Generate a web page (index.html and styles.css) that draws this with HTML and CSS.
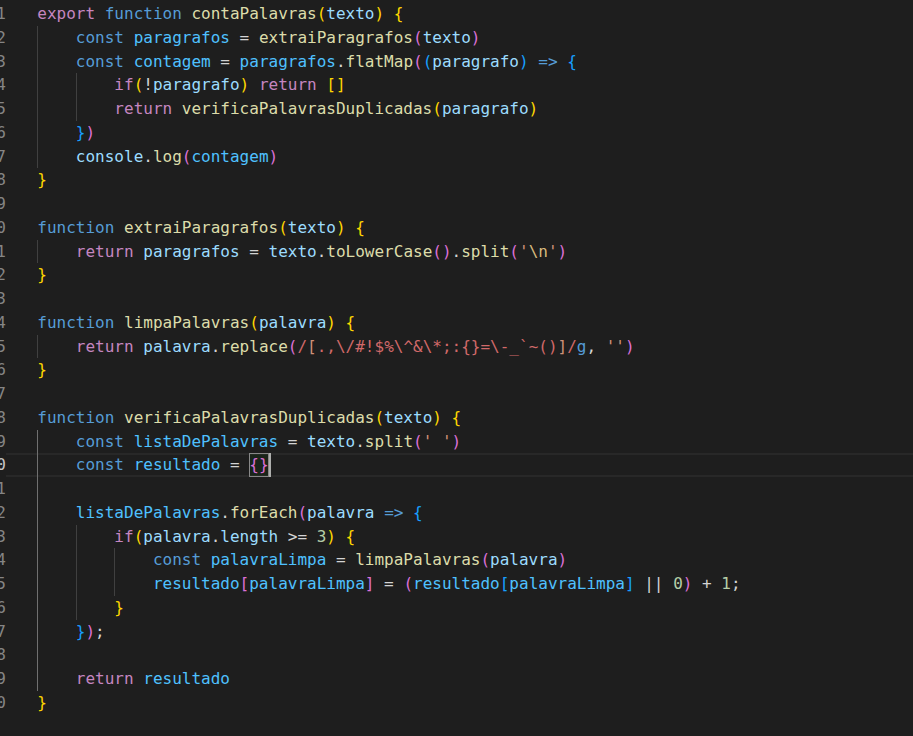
FILE: index.html
```html
<!DOCTYPE html>
<html lang="pt">
<head>
<meta charset="utf-8">
<title>editor</title>
<link rel="stylesheet" href="styles.css">
</head>
<body>
<div class="editor">
  <div class="line"><span class="num">1</span><span class="code"><span class="kw">export</span> <span class="st">function</span> <span class="fn">contaPalavras</span><span class="b1">(</span><span class="v">texto</span><span class="b1">)</span> <span class="b1">{</span></span></div>
  <div class="line"><span class="num">2</span><span class="code"><span class="g"></span><span class="st">const</span> <span class="c">paragrafos</span> = <span class="fn">extraiParagrafos</span><span class="b2">(</span><span class="v">texto</span><span class="b2">)</span></span></div>
  <div class="line"><span class="num">3</span><span class="code"><span class="g"></span><span class="st">const</span> <span class="c">contagem</span> = <span class="c">paragrafos</span>.<span class="fn">flatMap</span><span class="b2">(</span><span class="b3">(</span><span class="v">paragrafo</span><span class="b3">)</span> <span class="st">=&gt;</span> <span class="b3">{</span></span></div>
  <div class="line"><span class="num">4</span><span class="code"><span class="g"></span><span class="g"></span><span class="kw">if</span><span class="b1">(</span>!<span class="v">paragrafo</span><span class="b1">)</span> <span class="kw">return</span> <span class="b1">[]</span></span></div>
  <div class="line"><span class="num">5</span><span class="code"><span class="g"></span><span class="g"></span><span class="kw">return</span> <span class="fn">verificaPalavrasDuplicadas</span><span class="b1">(</span><span class="v">paragrafo</span><span class="b1">)</span></span></div>
  <div class="line"><span class="num">6</span><span class="code"><span class="g"></span><span class="b3">}</span><span class="b2">)</span></span></div>
  <div class="line"><span class="num">7</span><span class="code"><span class="g"></span><span class="v">console</span>.<span class="fn">log</span><span class="b2">(</span><span class="c">contagem</span><span class="b2">)</span></span></div>
  <div class="line"><span class="num">8</span><span class="code"><span class="b1">}</span></span></div>
  <div class="line"><span class="num">9</span><span class="code"></span></div>
  <div class="line"><span class="num">10</span><span class="code"><span class="st">function</span> <span class="fn">extraiParagrafos</span><span class="b1">(</span><span class="v">texto</span><span class="b1">)</span> <span class="b1">{</span></span></div>
  <div class="line"><span class="num">11</span><span class="code"><span class="g"></span><span class="kw">return</span> <span class="v">paragrafos</span> = <span class="v">texto</span>.<span class="fn">toLowerCase</span><span class="b2">()</span>.<span class="fn">split</span><span class="b2">(</span><span class="s">'</span><span class="esc">\n</span><span class="s">'</span><span class="b2">)</span></span></div>
  <div class="line"><span class="num">12</span><span class="code"><span class="b1">}</span></span></div>
  <div class="line"><span class="num">13</span><span class="code"></span></div>
  <div class="line"><span class="num">14</span><span class="code"><span class="st">function</span> <span class="fn">limpaPalavras</span><span class="b1">(</span><span class="v">palavra</span><span class="b1">)</span> <span class="b1">{</span></span></div>
  <div class="line"><span class="num">15</span><span class="code"><span class="g"></span><span class="kw">return</span> <span class="v">palavra</span>.<span class="fn">replace</span><span class="b2">(</span><span class="re">/</span><span class="s">[</span><span class="re">.,\/#!$%\^&amp;\*;:{}=\-_`~()</span><span class="s">]</span><span class="re">/</span><span class="st">g</span>, <span class="s">''</span><span class="b2">)</span></span></div>
  <div class="line"><span class="num">16</span><span class="code"><span class="b1">}</span></span></div>
  <div class="line"><span class="num">17</span><span class="code"></span></div>
  <div class="line"><span class="num">18</span><span class="code"><span class="st">function</span> <span class="fn">verificaPalavrasDuplicadas</span><span class="b1">(</span><span class="v">texto</span><span class="b1">)</span> <span class="b1">{</span></span></div>
  <div class="line"><span class="num">19</span><span class="code"><span class="g ga"></span><span class="st">const</span> <span class="c">listaDePalavras</span> = <span class="v">texto</span>.<span class="fn">split</span><span class="b2">(</span><span class="s">' '</span><span class="b2">)</span></span></div>
  <div class="line cur"><span class="num">20</span><span class="code"><span class="g ga"></span><span class="st">const</span> <span class="c">resultado</span> = <span class="match"><span class="b2">{}</span></span><span class="caret"></span></span></div>
  <div class="line"><span class="num">21</span><span class="code"><span class="g ga"></span></span></div>
  <div class="line"><span class="num">22</span><span class="code"><span class="g ga"></span><span class="c">listaDePalavras</span>.<span class="fn">forEach</span><span class="b2">(</span><span class="v">palavra</span> <span class="st">=&gt;</span> <span class="b3">{</span></span></div>
  <div class="line"><span class="num">23</span><span class="code"><span class="g ga"></span><span class="g"></span><span class="kw">if</span><span class="b1">(</span><span class="v">palavra</span>.<span class="v">length</span> &gt;= <span class="n">3</span><span class="b1">)</span> <span class="b1">{</span></span></div>
  <div class="line"><span class="num">24</span><span class="code"><span class="g ga"></span><span class="g"></span><span class="g"></span><span class="st">const</span> <span class="c">palavraLimpa</span> = <span class="fn">limpaPalavras</span><span class="b2">(</span><span class="v">palavra</span><span class="b2">)</span></span></div>
  <div class="line"><span class="num">25</span><span class="code"><span class="g ga"></span><span class="g"></span><span class="g"></span><span class="c">resultado</span><span class="b2">[</span><span class="c">palavraLimpa</span><span class="b2">]</span> = <span class="b2">(</span><span class="c">resultado</span><span class="b3">[</span><span class="c">palavraLimpa</span><span class="b3">]</span> || <span class="n">0</span><span class="b2">)</span> + <span class="n">1</span>;</span></div>
  <div class="line"><span class="num">26</span><span class="code"><span class="g ga"></span><span class="g"></span><span class="b1">}</span></span></div>
  <div class="line"><span class="num">27</span><span class="code"><span class="g ga"></span><span class="b3">}</span><span class="b2">)</span>;</span></div>
  <div class="line"><span class="num">28</span><span class="code"><span class="g ga"></span></span></div>
  <div class="line"><span class="num">29</span><span class="code"><span class="g ga"></span><span class="kw">return</span> <span class="c">resultado</span></span></div>
  <div class="line"><span class="num">30</span><span class="code"><span class="b1">}</span></span></div>
</div>
</body>
</html>
```
FILE: styles.css
```css
html, body {
  margin: 0;
  padding: 0;
  background: #1e1e1e;
  overflow: hidden;
  height: 100%;
}

.editor {
  padding-top: 2px;
  font-family: "DejaVu Sans Mono", "Liberation Mono", monospace;
  font-size: 16px;
  line-height: 23.75px;
  color: #d4d4d4;
}

.line {
  display: flex;
  height: 23.75px;
  white-space: pre;
}

.num {
  flex: none;
  width: 30px;
  margin-left: -24px;
  text-align: right;
  color: #858585;
}

.cur .num {
  color: #c6c6c6;
}

.code {
  flex: 1;
  padding-left: 31.3px;
  height: 23.75px;
}

.cur .code {
  box-shadow: inset 0 2px #282828, inset 0 -2px #282828;
}

.g {
  display: inline-block;
  width: 4ch;
  height: 23.75px;
  vertical-align: top;
  box-shadow: inset 1px 0 #404040;
}

.g.ga {
  box-shadow: inset 1px 0 #707070;
}

.kw { color: #c586c0; }
.st { color: #569cd6; }
.fn { color: #dcdcaa; }
.v { color: #9cdcfe; }
.c { color: #4fc1ff; }
.s { color: #ce9178; }
.esc { color: #d7ba7d; }
.re { color: #d16969; }
.n { color: #b5cea8; }
.b1 { color: #ffd700; }
.b2 { color: #da70d6; }
.b3 { color: #179fff; }

.match {
  display: inline-block;
  height: 23.75px;
  vertical-align: top;
  background: rgba(0, 100, 0, 0.1);
  box-shadow: inset 0 0 0 1px #888888;
}

.caret {
  display: inline-block;
  width: 2px;
  height: 23.75px;
  vertical-align: top;
  background: #aeafad;
}
```
